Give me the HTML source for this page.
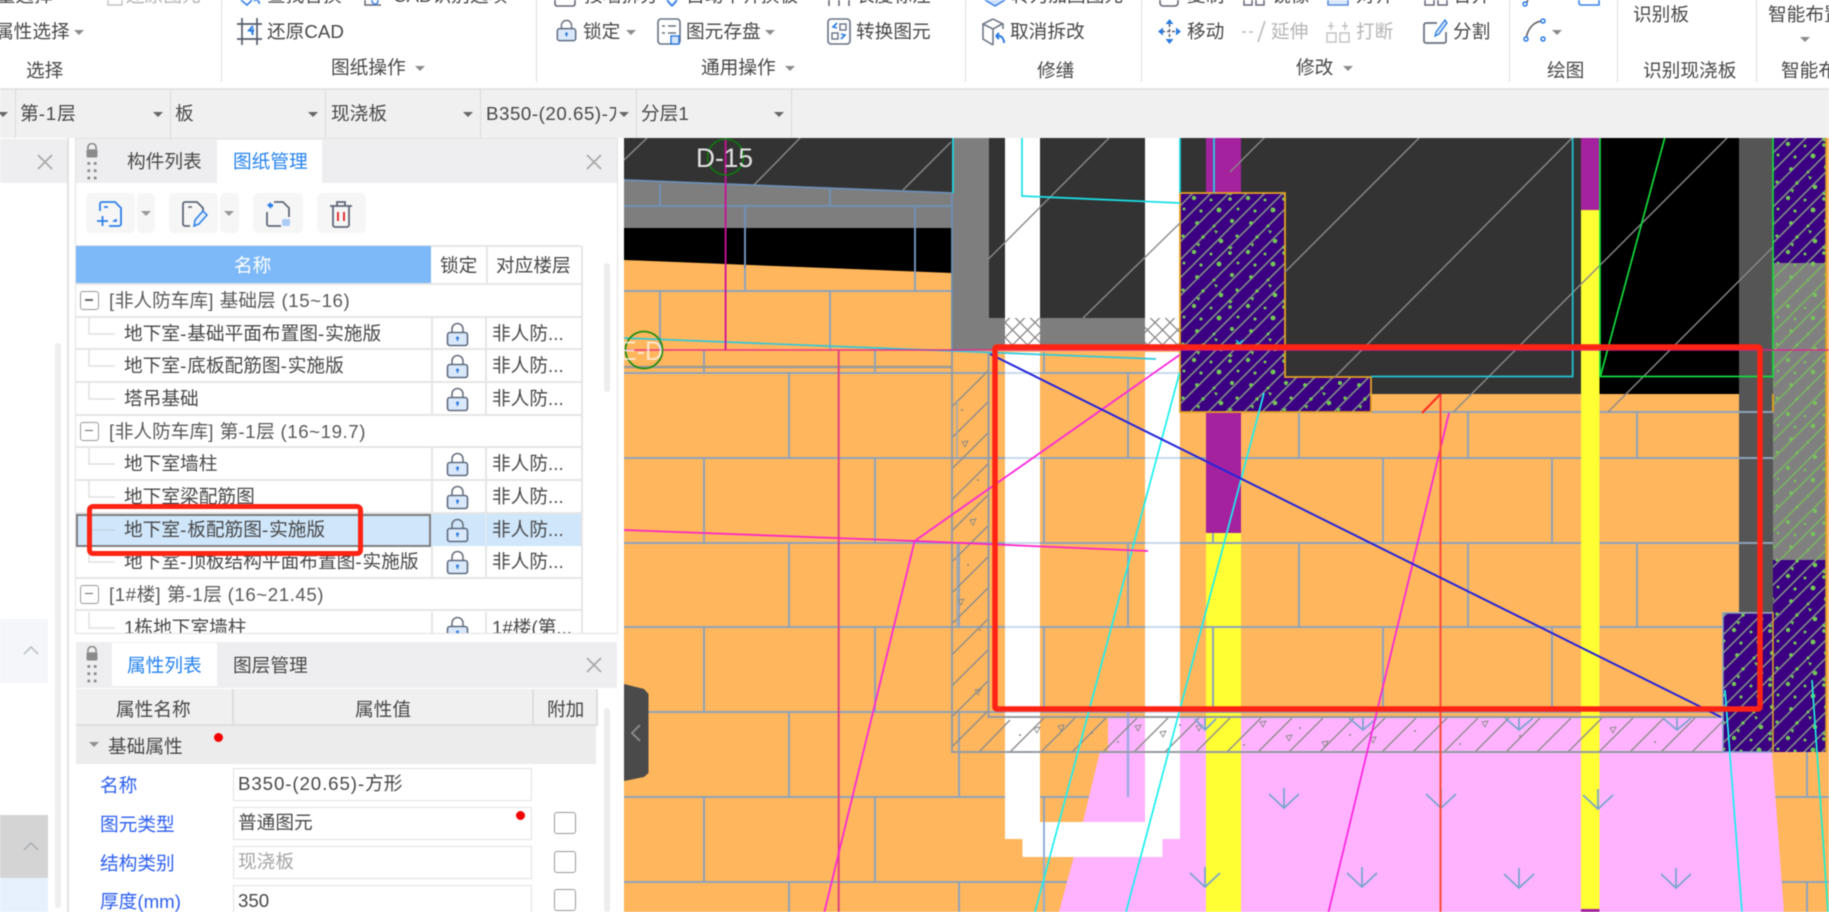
<!DOCTYPE html>
<html lang="zh">
<head>
<meta charset="utf-8">
<title>图纸管理</title>
<style>
html,body{margin:0;padding:0;width:1829px;height:912px;overflow:hidden;background:#fff}
body{position:relative;font-family:"Liberation Sans","Noto Sans CJK SC",sans-serif;color:#444;filter:blur(.5px)}
.t{position:absolute;white-space:nowrap;font-size:18.7px;line-height:24px;height:24px;color:#484848}
.l{letter-spacing:.9px}
.m{letter-spacing:.55px}
.g{color:#b5b5b5}
.b{position:absolute}
.a{position:absolute;width:0;height:0;border-left:5px solid transparent;border-right:5px solid transparent;border-top:5px solid #8b8b8b}
.d{position:absolute;top:0;width:1px;height:82px;background:#dcdcdc}
.c{position:absolute;top:89px;height:49px;width:1px;background:#dcdcdc}
.x{position:absolute;width:20px;height:20px}
.btn{position:absolute;top:193px;height:40px;background:#f6f6f6;border-radius:5px}
.r{position:absolute;left:0;width:505px;height:32.65px;border-bottom:2px solid #e6e6e6;box-sizing:border-box}
.r .n{position:absolute;left:48px;top:4px;font-size:18.7px;line-height:24px;white-space:nowrap;color:#484848}
.r .gp{position:absolute;left:33px;top:4px;font-size:18.7px;line-height:24px;white-space:nowrap;color:#5a5a5a}
.r .f{position:absolute;left:416px;top:4px;font-size:18.7px;line-height:24px;white-space:nowrap;color:#484848}
.r .v1{position:absolute;left:355px;top:0;width:2px;height:100%;background:#e6e6e6}
.r .v2{position:absolute;left:409px;top:0;width:2px;height:100%;background:#e6e6e6}
.r svg.l2{position:absolute;left:369px;top:4px;width:25px;height:25px}
.r svg.tr{position:absolute;left:0;top:0;width:48px;height:33px}
.box{position:absolute;left:4px;top:6px;width:19px;height:19px;border:1.3px solid #999;border-radius:3px;box-sizing:border-box;background:#fff}
.box:after{content:"";position:absolute;left:4px;top:7px;width:8px;height:1.5px;background:#666}
.inp{position:absolute;left:233px;width:299px;height:33px;box-sizing:border-box;border:1.5px solid #e2e2e2;background:#fff}
.inp span.v{position:absolute;left:4px;top:3px;font-size:18.7px;line-height:24px;white-space:nowrap;color:#484848}
.chk{position:absolute;left:554px;width:22px;height:22px;box-sizing:border-box;border:1.5px solid #9a9a9a;border-radius:3px;background:#fff}
.lb{color:#2d5ff0}
</style>
</head>
<body>
<svg width="0" height="0" style="position:absolute">
<defs>
<symbol id="lk" viewBox="0 0 25 25">
<path d="M7 11V7a5.500 5.500 0 0 1 11 0v4" fill="none" stroke="#6b7280" stroke-width="1.600"/>
<rect x="2.500" y="10.500" width="20" height="13" rx="2.500" fill="#d9e8fb" stroke="#5f6b80" stroke-width="1.600"/>
<circle cx="12.500" cy="16" r="1.500" fill="#2a7be0"/><path d="M12.500 16v3" stroke="#2a7be0" stroke-width="1.400"/>
</symbol>
<symbol id="pl" viewBox="0 0 16 44">
<path d="M3.500 7V5a4.500 4.500 0 0 1 9 0v2" fill="none" stroke="#8a8a8a" stroke-width="1.800"/>
<rect x="2" y="7" width="12" height="9" rx="1.500" fill="#8a8a8a"/>
<g fill="#8a8a8a"><rect x="3" y="21" width="3" height="3"/><rect x="10" y="21" width="3" height="3"/><rect x="3" y="29" width="3" height="3"/><rect x="10" y="29" width="3" height="3"/><rect x="3" y="37" width="3" height="3"/><rect x="10" y="37" width="3" height="3"/></g>
</symbol>
<symbol id="xx" viewBox="0 0 20 20"><path d="M3 3L17 17M17 3L3 17" stroke="#a8a8a8" stroke-width="1.700" fill="none"/></symbol>
</defs>
</svg>

<!-- ribbon -->
<div class="d" style="left:221px"></div><div class="d" style="left:536px"></div><div class="d" style="left:965px"></div><div class="d" style="left:1141px"></div><div class="d" style="left:1509px"></div><div class="d" style="left:1617px"></div><div class="d" style="left:1756px"></div>

<div class="t" style="left:-22px;top:-16px">批量选择</div>
<div class="t g" style="left:126px;top:-16px">还原图元</div>
<div class="t" style="left:-5px;top:20px">属性选择</div><div class="a" style="left:74px;top:30px"></div>
<div class="t" style="left:26px;top:59px">选择</div>

<svg class="b" style="left:106px;top:0" width="18" height="7"><path d="M2 0v5h14V0" fill="none" stroke="#c4c4c4" stroke-width="1.500"/></svg>
<svg class="b" style="left:238px;top:0" width="24" height="7"><path d="M3 0l6 5 5-5M16 1a3 3 0 0 1 5 3" fill="none" stroke="#3b82e8" stroke-width="1.600"/></svg>
<div class="t" style="left:267px;top:-16px">查找替换</div>
<svg class="b" style="left:362px;top:0" width="24" height="7"><path d="M3 0v5h16" fill="none" stroke="#667" stroke-width="1.500"/><circle cx="13" cy="1" r="3" fill="none" stroke="#3b82e8" stroke-width="1.500"/></svg>
<div class="t" style="left:393px;top:-16px">CAD识别选项</div>

<svg class="b" style="left:237px;top:18px" width="25" height="27" viewBox="0 0 25 27"><path d="M0 6h25M0 21h25M5 0v27M20 0v27" stroke="#555c6b" stroke-width="1.700" fill="none"/><path d="M16 8l-4 4.500 4 .5v-1c-1 1-1 3 0 5" stroke="#2a7be0" stroke-width="2" fill="none"/></svg>
<div class="t" style="left:267px;top:20px">还原CAD</div>
<div class="t" style="left:331px;top:56px">图纸操作</div><div class="a" style="left:415px;top:66px"></div>

<svg class="b" style="left:553px;top:0" width="24" height="8"><path d="M2 0v4a2 2 0 0 0 2 2h16a2 2 0 0 0 2-2V0" fill="none" stroke="#667" stroke-width="1.600"/></svg>
<div class="t" style="left:584px;top:-16px">按墙拆分</div>
<svg class="b" style="left:555px;top:18px" width="23" height="25" viewBox="0 0 25 27"><use href="#lk" width="25" height="27"/></svg>
<div class="t" style="left:583px;top:20px">锁定</div><div class="a" style="left:626px;top:30px"></div>

<svg class="b" style="left:662px;top:0" width="20" height="8"><path d="M10 6L5 0M10 6l5-6" stroke="#3b82e8" stroke-width="2" fill="none"/></svg>
<div class="t" style="left:686px;top:-16px">自动平齐换板</div>
<svg class="b" style="left:657px;top:18px" width="24" height="27" viewBox="0 0 24 27"><rect x="1" y="1" width="22" height="25" rx="3" fill="#fff" stroke="#687385" stroke-width="1.600"/><path d="M5 8h3M11 8h8M5 15h3M11 15h8" stroke="#687385" stroke-width="1.600"/><rect x="14" y="18" width="8" height="8" fill="#d4e5fb" stroke="#2a7be0" stroke-width="1.400"/></svg>
<div class="t" style="left:686px;top:20px">图元存盘</div><div class="a" style="left:765px;top:30px"></div>
<div class="t" style="left:701px;top:56px">通用操作</div><div class="a" style="left:785px;top:66px"></div>

<svg class="b" style="left:827px;top:0" width="24" height="7"><path d="M2 0v6M22 0v6M12 0v6" stroke="#667" stroke-width="1.600"/></svg>
<div class="t" style="left:856px;top:-16px">长度标注</div>
<svg class="b" style="left:827px;top:18px" width="24" height="27" viewBox="0 0 24 27"><rect x="1" y="1" width="22" height="25" rx="3" fill="#fff" stroke="#687385" stroke-width="1.600"/><rect x="13" y="6" width="6" height="6" fill="none" stroke="#687385" stroke-width="1.400"/><rect x="5" y="15" width="6" height="6" fill="none" stroke="#687385" stroke-width="1.400"/><path d="M10 5L6 9l4 1M14 21l4-4-4-1" stroke="#2a7be0" stroke-width="1.600" fill="none"/></svg>
<div class="t" style="left:856px;top:20px">转换图元</div>

<svg class="b" style="left:984px;top:0" width="22" height="7"><path d="M1 0l10 6L21 0" fill="#cfe2fb" stroke="#3b82e8" stroke-width="1.500"/></svg>
<div class="t" style="left:1011px;top:-16px">转为加固图元</div>
<svg class="b" style="left:982px;top:18px" width="24" height="28" viewBox="0 0 24 28"><path d="M11 1L21 6v5M11 1L1 6v15l10 6M1 6l10 5v16M11 11l9-5" fill="none" stroke="#6e7786" stroke-width="1.600"/><path d="M22 25c0-5-3-8-8-7M14 18l3-3M14 18l3 3" stroke="#2a7be0" stroke-width="2" fill="none"/></svg>
<div class="t" style="left:1010px;top:20px">取消拆改</div>
<div class="t" style="left:1037px;top:59px">修缮</div>

<svg class="b" style="left:1158px;top:0" width="22" height="7"><path d="M2 0v3a3 3 0 0 0 3 3h12a3 3 0 0 0 3-3V0" fill="none" stroke="#667" stroke-width="1.600"/></svg>
<div class="t" style="left:1187px;top:-16px">复制</div>
<svg class="b" style="left:1158px;top:19px" width="23" height="25" viewBox="0 0 23 25"><path d="M11.500 5v15M4 12.500h15" stroke="#555c6b" stroke-width="1.500" stroke-dasharray="3 2"/><path d="M11.500 0l-4 5h8zM11.500 25l-4-5h8zM0 12.500l5-4v8zM23 12.500l-5-4v8z" fill="#2a7be0"/></svg>
<div class="t" style="left:1187px;top:20px">移动</div>

<svg class="b" style="left:1243px;top:0" width="22" height="6"><path d="M1 0v5h8V0M13 0v5h8V0" stroke="#667" stroke-width="1.500" fill="none"/></svg>
<div class="t" style="left:1272px;top:-16px">镜像</div>
<svg class="b" style="left:1240px;top:20px" width="26" height="24" viewBox="0 0 26 24"><path d="M2 12h14" stroke="#bbb" stroke-width="1.500" stroke-dasharray="4 3"/><path d="M18 22L25 1" stroke="#bbb" stroke-width="1.600"/></svg>
<div class="t g" style="left:1271px;top:20px">延伸</div>
<svg class="b" style="left:1327px;top:0" width="22" height="6"><rect x="1" y="-6" width="20" height="11" fill="#dbe9fb" stroke="#5a8ad8" stroke-width="1.500"/></svg>
<div class="t" style="left:1356px;top:-16px">对齐</div>
<svg class="b" style="left:1326px;top:20px" width="24" height="24" viewBox="0 0 24 24"><g fill="none" stroke="#c4c4c4" stroke-width="1.500"><rect x="1" y="13" width="9" height="9"/><rect x="14" y="13" width="9" height="9"/><path d="M5 2v8M19 2v8M8 6h-6M16 6h6"/></g></svg>
<div class="t g" style="left:1356px;top:20px">打断</div>
<svg class="b" style="left:1424px;top:0" width="24" height="6"><path d="M1 0v5h9V0M14 0v5h9V0" stroke="#667" stroke-width="1.500" fill="none"/></svg>
<div class="t" style="left:1453px;top:-16px">合并</div>
<svg class="b" style="left:1423px;top:19px" width="25" height="26" viewBox="0 0 25 26"><path d="M14 4H3a2 2 0 0 0-2 2v16a2 2 0 0 0 2 2h18a2 2 0 0 0 2-2V13" fill="none" stroke="#666e7d" stroke-width="1.700"/><path d="M22 1l-9 12-1 4 4-2 8-11z" fill="#d4e5fb" stroke="#2a7be0" stroke-width="1.300"/></svg>
<div class="t" style="left:1453px;top:20px">分割</div>
<div class="t" style="left:1296px;top:56px">修改</div><div class="a" style="left:1343px;top:66px"></div>

<svg class="b" style="left:1522px;top:0" width="30" height="8"><path d="M2 6C4 4 5 2 6 0" stroke="#555" stroke-width="1.500" fill="none"/><circle cx="3" cy="4" r="2" fill="#fff" stroke="#2a7be0" stroke-width="1.500"/></svg>
<svg class="b" style="left:1578px;top:0" width="24" height="6"><path d="M1 0v3a2 2 0 0 0 2 2h18V0" stroke="#3b82e8" stroke-width="1.600" fill="none"/></svg>
<svg class="b" style="left:1523px;top:17px" width="26" height="26" viewBox="0 0 26 26"><path d="M3 21C5 12 10 5 19 4" fill="none" stroke="#666" stroke-width="1.700"/><g fill="#fff" stroke="#2a7be0" stroke-width="1.500"><circle cx="3" cy="22" r="2"/><circle cx="20" cy="4" r="2"/><circle cx="20" cy="22" r="2"/></g></svg>
<div class="a" style="left:1552px;top:30px"></div>
<div class="t" style="left:1547px;top:59px">绘图</div>

<div class="t" style="left:1633px;top:3px">识别板</div>
<div class="t" style="left:1643px;top:59px">识别现浇板</div>
<div class="t" style="left:1768px;top:3px">智能布置</div>
<div class="a" style="left:1800px;top:37px"></div>
<div class="t" style="left:1781px;top:59px">智能布</div>

<!-- selector bar -->
<div class="b" style="left:0;top:88px;width:1829px;height:50px;background:#f0f0f0;border-top:2px solid #e4e4e4;box-sizing:border-box"></div>
<div class="c" style="left:15px"></div><div class="c" style="left:170px"></div><div class="c" style="left:325px"></div><div class="c" style="left:480px"></div><div class="c" style="left:636px"></div><div class="c" style="left:791px"></div>
<div class="a" style="left:-2px;top:112px;border-top-color:#666"></div>
<div class="t" style="left:20px;top:102px">第<span class="l">-1</span>层</div><div class="a" style="left:153px;top:112px;border-top-color:#666"></div>
<div class="t" style="left:175px;top:102px">板</div><div class="a" style="left:308px;top:112px;border-top-color:#666"></div>
<div class="t" style="left:331px;top:102px">现浇板</div><div class="a" style="left:463px;top:112px;border-top-color:#666"></div>
<div class="b" style="left:486px;top:100px;width:130px;height:28px;overflow:hidden"><div class="t" style="left:0;top:2px"><span style="letter-spacing:.55px">B350-(20.65)-</span>方形</div></div>
<div class="a" style="left:619px;top:112px;border-top-color:#666"></div>
<div class="t" style="left:641px;top:102px">分层1</div><div class="a" style="left:774px;top:112px;border-top-color:#666"></div>

<!-- far-left panel -->
<div class="b" style="left:0;top:139px;width:67px;height:44px;background:#eeeef0"></div>
<svg class="x" style="left:35px;top:152px"><use href="#xx"/></svg>
<div class="b" style="left:67px;top:138px;width:2px;height:774px;background:#e2e2e2"></div>
<div class="b" style="left:55px;top:343px;width:6px;height:565px;background:#eeeeee;border-radius:3px"></div>
<div class="b" style="left:0;top:619px;width:48px;height:64px;background:#f4f6f9"></div>
<svg class="b" style="left:23px;top:645px" width="16" height="10"><path d="M1 9l7-7 7 7" stroke="#bcc3cc" stroke-width="1.700" fill="none"/></svg>
<div class="b" style="left:0;top:815px;width:48px;height:63px;background:#d4d4d4"></div>
<svg class="b" style="left:23px;top:841px" width="16" height="10"><path d="M1 9l7-7 7 7" stroke="#aeb3b8" stroke-width="1.700" fill="none"/></svg>
<div class="b" style="left:0;top:878px;width:48px;height:34px;background:#e6f1fd"></div>

<!-- drawing management panel -->
<div class="b" style="left:75px;top:138px;width:543px;height:496px;border:1px solid #e2e2e2;box-sizing:border-box"></div>
<div class="b" style="left:76px;top:139px;width:541px;height:44px;background:#eeeef0"></div>
<svg class="b" style="left:84px;top:143px" width="16" height="40"><use href="#pl" width="16" height="40"/></svg>
<div class="t" style="left:127px;top:150px">构件列表</div>
<div class="b" style="left:217px;top:140px;width:105px;height:43px;background:#fff"></div>
<div class="t" style="left:233px;top:150px;color:#2583ee">图纸管理</div>
<svg class="x" style="left:584px;top:152px"><use href="#xx"/></svg>

<div class="btn" style="left:86px;width:49px"></div><div class="btn" style="left:137px;width:18px"></div>
<div class="btn" style="left:169px;width:49px"></div><div class="btn" style="left:220px;width:19px"></div>
<div class="btn" style="left:253px;width:50px"></div><div class="btn" style="left:317px;width:49px"></div>
<svg class="b" style="left:96px;top:200px" width="28" height="28" viewBox="0 0 28 28"><path d="M4 11V4a2 2 0 0 1 2-2h13l6 6v16a2 2 0 0 1-2 2H13" fill="none" stroke="#2d7fe8" stroke-width="1.800"/><path d="M1 21h11M6.500 16v10M9 8V7h3M20 19v2h-3" stroke="#2d7fe8" stroke-width="1.800" fill="none"/></svg>
<div class="a" style="left:141px;top:211px;border-top-color:#999"></div>
<svg class="b" style="left:180px;top:200px" width="28" height="28" viewBox="0 0 28 28"><path d="M10 26H5a2 2 0 0 1-2-2V4a2 2 0 0 1 2-2h12l6 6v3" fill="none" stroke="#5f6878" stroke-width="1.800"/><path d="M9 8V7h3" stroke="#5f6878" stroke-width="1.500" fill="none"/><path d="M14 26l1-6 8-9 4 4-8 9z" fill="#e4effd" stroke="#2d7fe8" stroke-width="1.500"/></svg>
<div class="a" style="left:224px;top:211px;border-top-color:#999"></div>
<svg class="b" style="left:264px;top:200px" width="28" height="28" viewBox="0 0 28 28"><path d="M10 2h9l6 6v9M3 12v12a2 2 0 0 0 2 2h12" fill="none" stroke="#5f6878" stroke-width="1.800"/><path d="M3 5l4-3v2h2v3H7v2z" fill="#2d7fe8"/><rect x="18" y="19" width="8" height="7" rx="2" fill="#a9cbf6"/></svg>
<svg class="b" style="left:329px;top:200px" width="24" height="28" viewBox="0 0 24 28"><path d="M1 6h22M8 6V2h8v4" fill="none" stroke="#5f6878" stroke-width="1.800"/><path d="M4 6v19a2 2 0 0 0 2 2h12a2 2 0 0 0 2-2V6" fill="none" stroke="#5f6878" stroke-width="1.800"/><path d="M9 12v9M15 12v9" stroke="#e53232" stroke-width="2"/></svg>

<!-- table head -->
<div class="b" style="left:76px;top:245px;width:505px;height:39px;background:#fff;border-top:2px solid #e6e6e6;box-sizing:border-box"></div>
<div class="b" style="left:76px;top:246px;width:355px;height:38px;background:#7db9f9"></div>
<div class="b" style="left:486px;top:246px;width:2px;height:38px;background:#e6e6e6"></div>
<div class="b" style="left:581px;top:246px;width:2px;height:388px;background:#e6e6e6"></div>
<div class="t" style="left:234px;top:254px;color:#fff">名称</div>
<div class="t" style="left:440px;top:254px">锁定</div>
<div class="t" style="left:496px;top:254px">对应楼层</div>
<div class="b" style="left:604px;top:263px;width:6px;height:129px;background:#ededed;border-radius:3px"></div>

<div class="b" style="left:76px;top:283px;width:505px;height:350px;overflow:hidden;border-top:2px solid #e6e6e6;box-sizing:border-box">
<div class="r" style="top:0"><div class="box"></div><span class="gp"><span class="m">[</span>非人防车库<span class="m">] </span>基础层<span class="m"> (15~16)</span></span></div>
<div class="r" style="top:32.65px"><svg class="tr"><path d="M13 0V16H39" stroke="#e0e0e0" stroke-width="1.500" fill="none"/></svg><span class="n">地下室<span class="l">-</span>基础平面布置图<span class="l">-</span>实施版</span><i class="v1"></i><i class="v2"></i><svg class="l2"><use href="#lk"/></svg><span class="f">非人防...</span></div>
<div class="r" style="top:65.3px"><svg class="tr"><path d="M13 0V16H39" stroke="#e0e0e0" stroke-width="1.500" fill="none"/></svg><span class="n">地下室<span class="l">-</span>底板配筋图<span class="l">-</span>实施版</span><i class="v1"></i><i class="v2"></i><svg class="l2"><use href="#lk"/></svg><span class="f">非人防...</span></div>
<div class="r" style="top:97.95px"><svg class="tr"><path d="M13 0V16H39" stroke="#e0e0e0" stroke-width="1.500" fill="none"/></svg><span class="n">塔吊基础</span><i class="v1"></i><i class="v2"></i><svg class="l2"><use href="#lk"/></svg><span class="f">非人防...</span></div>
<div class="r" style="top:130.6px"><div class="box"></div><span class="gp"><span class="m">[</span>非人防车库<span class="m">] </span>第<span class="m">-1</span>层<span class="m"> (16~19.7)</span></span></div>
<div class="r" style="top:163.25px"><svg class="tr"><path d="M13 0V16H39" stroke="#e0e0e0" stroke-width="1.500" fill="none"/></svg><span class="n">地下室墙柱</span><i class="v1"></i><i class="v2"></i><svg class="l2"><use href="#lk"/></svg><span class="f">非人防...</span></div>
<div class="r" style="top:195.9px"><svg class="tr"><path d="M13 0V16H39" stroke="#e0e0e0" stroke-width="1.500" fill="none"/></svg><span class="n">地下室梁配筋图</span><i class="v1"></i><i class="v2"></i><svg class="l2"><use href="#lk"/></svg><span class="f">非人防...</span></div>
<div class="r" style="top:228.55px;background:#cfe6fb;border-bottom:0"><svg class="tr"><path d="M13 0V16H39" stroke="#c6d6e4" stroke-width="1.500" fill="none"/></svg><div class="b" style="left:0;top:0;width:355px;height:33px;border:2.500px solid #7f7f7f;box-sizing:border-box"></div><span class="n">地下室<span class="l">-</span>板配筋图<span class="l">-</span>实施版</span><i class="v2" style="background:#dfeaf5"></i><svg class="l2"><use href="#lk"/></svg><span class="f">非人防...</span></div>
<div class="r" style="top:261.2px"><svg class="tr"><path d="M13 0V16H39" stroke="#e0e0e0" stroke-width="1.500" fill="none"/></svg><span class="n">地下室<span class="l">-</span>顶板结构平面布置图<span class="l">-</span>实施版</span><i class="v1"></i><i class="v2"></i><svg class="l2"><use href="#lk"/></svg><span class="f">非人防...</span></div>
<div class="r" style="top:293.85px"><div class="box"></div><span class="gp"><span class="m">[1#</span>楼<span class="m">] </span>第<span class="m">-1</span>层<span class="m"> (16~21.45)</span></span></div>
<div class="r" style="top:326.5px"><svg class="tr"><path d="M13 0V16H39" stroke="#e0e0e0" stroke-width="1.500" fill="none"/></svg><span class="n">1栋地下室墙柱</span><i class="v1"></i><i class="v2"></i><svg class="l2"><use href="#lk"/></svg><span class="f">1#楼(第...</span></div>
</div>

<!-- red callout left -->
<div class="b" style="left:87px;top:504px;width:276px;height:52px;border:5px solid #ff2314;border-radius:6px;box-sizing:border-box"></div>

<!-- properties panel -->
<div class="b" style="left:76px;top:642px;width:541px;height:46px;background:#eeeef0"></div>
<svg class="b" style="left:84px;top:646px" width="16" height="40"><use href="#pl" width="16" height="40"/></svg>
<div class="b" style="left:112px;top:643px;width:105px;height:43px;background:#fff"></div>
<div class="t" style="left:127px;top:654px;color:#2583ee">属性列表</div>
<div class="t" style="left:233px;top:654px">图层管理</div>
<svg class="x" style="left:584px;top:655px"><use href="#xx"/></svg>
<div class="b" style="left:76px;top:689px;width:521px;height:37px;background:#f0f0f0;border-bottom:2px solid #dedede;box-sizing:border-box"></div>
<div class="b" style="left:232px;top:689px;width:2px;height:37px;background:#dedede"></div>
<div class="b" style="left:532px;top:689px;width:2px;height:37px;background:#dedede"></div>
<div class="b" style="left:596px;top:689px;width:2px;height:37px;background:#dedede"></div>
<div class="t" style="left:116px;top:698px">属性名称</div>
<div class="t" style="left:355px;top:698px">属性值</div>
<div class="t" style="left:547px;top:698px">附加</div>
<div class="b" style="left:76px;top:726px;width:520px;height:38px;background:#ececec"></div>
<div class="a" style="left:89px;top:742px;border-top-color:#8f8f8f"></div>
<div class="t" style="left:108px;top:735px">基础属性</div>
<div class="b" style="left:213.500px;top:732.500px;width:9.500px;height:9.500px;border-radius:50%;background:#f40000"></div>
<div class="t lb" style="left:100px;top:774px">名称</div>
<div class="inp" style="top:768px"><span class="v"><span class="l">B350-(20.65)-</span>方形</span></div>
<div class="t lb" style="left:100px;top:813px">图元类型</div>
<div class="inp" style="top:807px"><span class="v">普通图元</span></div>
<div class="b" style="left:515.500px;top:810.500px;width:9.500px;height:9.500px;border-radius:50%;background:#f40000"></div>
<div class="chk" style="top:812px"></div>
<div class="t lb" style="left:100px;top:852px">结构类别</div>
<div class="inp" style="top:846px"><span class="v" style="color:#a5a5a5">现浇板</span></div>
<div class="chk" style="top:851px"></div>
<div class="t lb" style="left:100px;top:890px">厚度(mm)</div>
<div class="inp" style="top:885px"><span class="v">350</span></div>
<div class="chk" style="top:889px"></div>
<div class="b" style="left:604px;top:708px;width:6px;height:204px;background:#ededed;border-radius:3px"></div>

<!-- CAD canvas -->
<svg class="b" style="left:624px;top:138px" width="1205" height="774" viewBox="624 138 1205 774">
<defs>
<pattern id="ind" width="54" height="54" patternUnits="userSpaceOnUse">
<rect width="54" height="54" fill="#3c0082"/>
<path d="M-9 9L9 -9M-9 27L27 -9M-9 45L45 -9M-9 63L63 -9M9 63L63 9M27 63L63 27M45 63L63 45" stroke="#7e8f86" stroke-width="1.600" fill="none"/>
<g fill="#72c855"><circle cx="9" cy="7" r="1.900"/><circle cx="26" cy="10" r="1.500"/><circle cx="44" cy="5" r="2.100"/><circle cx="15" cy="21" r="1.700"/><circle cx="33" cy="25" r="2.300"/><circle cx="49" cy="20" r="1.600"/><circle cx="6" cy="36" r="2.200"/><circle cx="23" cy="38" r="1.500"/><circle cx="42" cy="37" r="1.900"/><circle cx="13" cy="49" r="1.600"/><circle cx="31" cy="48" r="2.500"/><circle cx="50" cy="47" r="1.500"/><path d="M26 14l4 1-2 3zM40 30l5 1-3 3zM8 28l4-1-1 4z"/></g>
</pattern>
<pattern id="gry" width="54" height="54" patternUnits="userSpaceOnUse">
<rect width="54" height="54" fill="#808080"/>
<path d="M-9 9L9 -9M-9 27L27 -9M-9 45L45 -9M-9 63L63 -9M9 63L63 9M27 63L63 27M45 63L63 45" stroke="#78b85c" stroke-width="1.500" fill="none"/>
<g fill="#78c25c"><circle cx="9" cy="7" r="1.700"/><circle cx="26" cy="10" r="1.300"/><circle cx="44" cy="5" r="1.900"/><circle cx="15" cy="21" r="1.500"/><circle cx="33" cy="25" r="2.100"/><circle cx="49" cy="20" r="1.400"/><circle cx="6" cy="36" r="2"/><circle cx="23" cy="38" r="1.300"/><circle cx="42" cy="37" r="1.700"/><circle cx="13" cy="49" r="1.400"/><circle cx="31" cy="48" r="2.300"/><circle cx="50" cy="47" r="1.300"/></g>
</pattern>
<pattern id="xh" width="15" height="15" patternUnits="userSpaceOnUse">
<rect width="15" height="15" fill="#fff"/><path d="M0 7.500L7.500 0 15 7.500 7.500 15z" fill="none" stroke="#8a8a8a" stroke-width="1.300"/>
</pattern>
</defs>

<rect x="624" y="138" width="1205" height="774" fill="#000"/>
<!-- dark zones -->
<path d="M624 138H952V193L624 180z" fill="#333"/>
<rect x="988" y="138" width="192" height="180" fill="#333"/>
<rect x="1180" y="138" width="401" height="256" fill="#333"/>
<path d="M624 180L952 193V228H624z" fill="#7e7e7e"/>
<rect x="952" y="138" width="37" height="212" fill="#7e7e7e"/>
<rect x="988" y="318" width="192" height="32" fill="#7e7e7e"/>
<!-- orange -->
<path d="M624 260L952 273V400H624z" fill="#ffb65c"/>
<rect x="952" y="350" width="228" height="50" fill="#ffb65c"/>
<rect x="624" y="394" width="1205" height="518" fill="#ffb65c"/>
<rect x="1739" y="138" width="34" height="474" fill="#555"/>
<!-- grid -->
<g fill="none" stroke="#8ea3ba" stroke-width="2">
<path d="M624 206H952M624 291H952M624 373H1180M1241 412H1773M624 458H1773M624 543H1773M624 627H1723M624 712H1723M624 797H1156M1733 797H1829M624 882H1134M1740 882H1829"/>
<path d="M660 184V206M830 188V206M745 206V291M915 206V291M660 291V350M830 291V350M704 350V373M875 350V373M1044 352V373"/>
<path d="M789 373V458M1128 373V458M1299 412V458M1468 412V458M1637 412V458"/>
<path d="M704 458V543M875 458V543M1044 458V543M1213 458V543M1383 458V543M1552 458V543"/>
<path d="M789 543V627M959 543V627M1128 543V627M1299 543V627M1468 543V627M1637 543V627"/>
<path d="M704 627V712M875 627V712M1044 627V712M1213 627V712M1383 627V712M1552 627V712"/>
<path d="M789 712V797M959 712V797M1128 712V797M1807 752V797"/>
<path d="M704 797V882M875 797V882M1044 797V882"/>
<path d="M789 882V912M959 882V912M1128 882V912M1807 882V912"/>
</g>
<path d="M624 367H952" stroke="#9a9a9a" stroke-width="2.500"/>
<!-- pink -->
<path d="M1108 718H1723V752H1772L1784 912H1059L1083 822z" fill="#ffb3ff"/>
<path d="M1128 712V797" stroke="#9fa8e6" stroke-width="2.500"/>
<!-- white stripes -->
<path d="M1005 352H1040V822H1145V352H1180V839H1162.500V857H1022.500V839H1005z" fill="#fff"/>
<rect x="1005" y="138" width="35" height="180" fill="#fff"/>
<rect x="1145" y="138" width="35" height="180" fill="#fff"/>
<rect x="1005" y="318" width="35" height="32" fill="url(#xh)"/>
<rect x="1145" y="318" width="35" height="32" fill="url(#xh)"/>
<path d="M1005 373H1040M1145 373H1180M1005 458H1040M1145 458H1180M1005 543H1040M1145 543H1180M1005 627H1040M1145 627H1180M1005 712H1040M1145 712H1180" stroke="#c9d9ec" stroke-width="2"/>
<path d="M1044 822V912" stroke="#8fb0d8" stroke-width="2"/>
<!-- purple & yellow columns -->
<rect x="1206" y="138" width="35" height="60" fill="#a5229f"/>
<rect x="1206" y="412" width="35" height="121" fill="#a5229f"/>
<rect x="1206" y="533" width="35" height="379" fill="#ffff33"/>
<path d="M1206 543H1241M1206 627H1241M1206 712H1241M1213 627V712M1213 543V533" stroke="#8ea3ba" stroke-width="2"/>
<rect x="1581" y="138" width="18.500" height="72" fill="#a5229f"/>
<rect x="1581" y="210" width="18.500" height="699" fill="#ffff33"/>
<rect x="1581" y="909" width="18.500" height="3" fill="#a5229f"/>
<!-- hatched bands -->
<rect x="1040" y="718" width="68" height="34" fill="#ffb65c"/>
<g fill="none" stroke="#8d8d8d" stroke-width="1.400">
<path d="M952 406.700L988 371M952 437.700L988 402M952 468.700L988 433M952 499.700L988 464M952 530.700L988 495M952 561.700L988 526M952 592.700L988 557M952 623.700L988 588M952 654.700L988 619M952 685.700L988 650M952 716.700L988 681M952 746.700L988 711"/>
<path d="M979 752L1010 720M1010 752L1044 718M1041 752L1075 718M1072 752L1106 718M1103 752L1137 718M1134 752L1168 718M1165 752L1199 718M1196 752L1230 718M1227 752L1261 718M1258 752L1292 718M1289 752L1323 718M1320 752L1354 718M1351 752L1385 718M1382 752L1416 718M1413 752L1447 718M1444 752L1478 718M1475 752L1509 718M1506 752L1540 718M1537 752L1571 718M1568 752L1602 718M1599 752L1633 718M1630 752L1664 718M1661 752L1695 718M1692 752L1723 721"/>
</g>
<g fill="none" stroke="#8a8a8a" stroke-width=".9">
<path d="M1034 728l6-1-3 6zM1058 726l6-1-3 6zM1135 726l6-1-3 6zM1160 732l6-1-3 6zM1196 726l6-1-3 6zM1260 722l6-1-3 6zM1286 736l6-1-3 6zM1322 742l6-1-3 6zM1370 738l6-1-3 6zM1482 722l6-1-3 6zM1610 728l6-1-3 6zM962 442l6-1-3 6zM970 520l6-1-3 6zM958 600l6-1-3 6zM975 690l6-1-3 6z"/>
</g>
<g fill="#8a8a8a"><circle cx="1020" cy="735" r="1"/><circle cx="1092" cy="733" r="1"/><circle cx="1118" cy="742" r="1"/><circle cx="1180" cy="725" r="1"/><circle cx="1244" cy="745" r="1"/><circle cx="1300" cy="728" r="1"/><circle cx="1350" cy="735" r="1"/><circle cx="1415" cy="731" r="1"/><circle cx="1460" cy="744" r="1"/><circle cx="1520" cy="736" r="1"/><circle cx="1655" cy="742" r="1"/><circle cx="962" cy="410" r="1"/><circle cx="978" cy="480" r="1"/><circle cx="968" cy="565" r="1"/><circle cx="980" cy="630" r="1"/></g>
<path d="M952 350V752H1723M988.500 352V717H1723" fill="none" stroke="#949ba3" stroke-width="2"/>
<path d="M957 400V458M957 543V627" stroke="#9aa8b8" stroke-width="1.500"/>
<!-- arrows -->
<g fill="none" stroke="#7aa5cf" stroke-width="1.800">
<path d="M1284 788V808M1269 794L1284 808L1299 794"/>
<path d="M1441 788V808M1426 794L1441 808L1456 794"/>
<path d="M1598 789V809M1583 795L1598 809L1613 795"/>
<path d="M1362 867V887M1347 873L1362 887L1377 873"/>
<path d="M1519 868V888M1504 874L1519 888L1534 874"/>
<path d="M1676 868V888M1661 874L1676 888L1691 874"/>
<path d="M1205 867V887M1190 873L1205 887L1220 873"/>
<path d="M1363 718V730M1349 718L1363 730L1377 718"/>
<path d="M1519 718V730M1505 718L1519 730L1533 718"/>
<path d="M1677 718V730M1663 718L1677 730L1691 718"/>
<path d="M1205 718V730M1195 719L1205 730L1216 719"/>
</g>
<!-- hatched blocks -->
<path d="M1180 193H1285V377H1371V412H1180z" fill="url(#ind)" stroke="#e2a21f" stroke-width="1.800"/>
<rect x="1723" y="613" width="50" height="139" fill="url(#ind)" stroke="#7ea0c8" stroke-width="1.500"/>
<rect x="1773" y="138" width="53" height="125" fill="url(#ind)"/>
<rect x="1773" y="263" width="53" height="297" fill="url(#gry)"/>
<rect x="1773" y="560" width="53" height="192" fill="url(#ind)"/>
<rect x="1826" y="138" width="3" height="614" fill="#ffb65c"/>
<path d="M1826 138V752" stroke="#d8a01f" stroke-width="1.500"/>
<path d="M1773 394V412" stroke="#d8a01f" stroke-width="2"/>
<path d="M1773 612V752" stroke="#d8a01f" stroke-width="1.500"/>
<!-- hatch diagonals over dark -->
<g fill="none" stroke="#8a8a8a" stroke-width="1.400">
<path d="M647 138L624 160M800 138L754 185M951 142L903 190"/>
<path d="M1109 138L988.500 259M1180 223L1083 318"/>
<path d="M1264 138L1230 172M1419 138L1285 272M1572 138L1335 377M1727 138L1453.500 412M1773 247L1608 412"/>
</g>
<!-- cyan/green -->
<g fill="none" stroke-width="1.700">
<path d="M953 138V193" stroke="#19d8e0"/>
<path d="M1022 138V196L1180 203" stroke="#19e0e6"/>
<path d="M1180 138V193M1214 138V193" stroke="#19d8e0"/>
<path d="M1572.700 138V376.500H1371" stroke="#22c6d4"/>
<path d="M1600 138V376.500H1773" stroke="#12dc3c"/>
<path d="M1664.700 138L1600.500 376" stroke="#12dc3c"/>
<path d="M1773 138V378" stroke="#12dc3c"/>
<path d="M624 338L1156 359" stroke="#2fc8dc"/>
<path d="M1179.500 373L1035 912" stroke="#19f0f0"/>
<path d="M1264 393L1126 912" stroke="#19f0f0"/>
<path d="M1725 690L1742 912" stroke="#19f0f0"/>
<path d="M1812 680L1828 912" stroke="#19f0d0"/>
</g>
<path d="M1236 340L1243 347M1243 340L1236 347" stroke="#19d0f0" stroke-width="1.500"/>
<!-- blue outlines top -->
<g fill="none" stroke="#6d8fb4" stroke-width="1.800">
<path d="M624 180L952 193M624 206H952M952 193V350"/>
<path d="M660 184V206M830 188V206"/>
<path d="M745 206V268M915 206V272"/>
</g>
<!-- magenta, red, blue lines -->
<path d="M725.600 138V350" stroke="#cc109a" stroke-width="1.800"/>
<path d="M624 350H1829" stroke="#e8208c" stroke-width="1.600" opacity=".85"/>
<path d="M838.700 350V912" stroke="#e0407f" stroke-width="2"/>
<path d="M1179.500 355L914.600 541L824.400 912" fill="none" stroke="#ff22e0" stroke-width="1.700"/>
<path d="M624 530L914.600 541L1148 551" fill="none" stroke="#ff22c8" stroke-width="1.700"/>
<path d="M1449 413L1328.500 912" stroke="#ff22e0" stroke-width="1.700"/>
<path d="M1440.500 394V912" stroke="#ff4a38" stroke-width="2"/>
<path d="M1440.500 394L1422 413" stroke="#ff2a20" stroke-width="2"/>
<path d="M990 354L1721 717" stroke="#2424dc" stroke-width="2"/>
<!-- axis bubbles -->
<circle cx="725.600" cy="157" r="18" fill="none" stroke="#0c7a0c" stroke-width="1.600"/>
<text x="696" y="167" font-family="Liberation Sans, sans-serif" font-size="27" textLength="57" lengthAdjust="spacingAndGlyphs" fill="#e2e2e2">D-15</text>
<circle cx="644" cy="350" r="18.500" fill="none" stroke="#1f8f16" stroke-width="1.800"/>
<text x="620" y="360" font-family="Liberation Sans, sans-serif" font-size="27" textLength="43" lengthAdjust="spacingAndGlyphs" fill="#fff" opacity=".65">E-D</text>
<!-- handle -->
<path d="M624 684L644 689L648.500 694V773L644 777L624 781z" fill="#4a4a4a"/>
<path d="M640 725L632 733L640 741" fill="none" stroke="#8e8e8e" stroke-width="1.800"/>
<!-- red callout -->
<rect x="995" y="347" width="765" height="362" fill="none" stroke="#ff2314" stroke-width="5.500" rx="2"/>
</svg>
</body>
</html>
